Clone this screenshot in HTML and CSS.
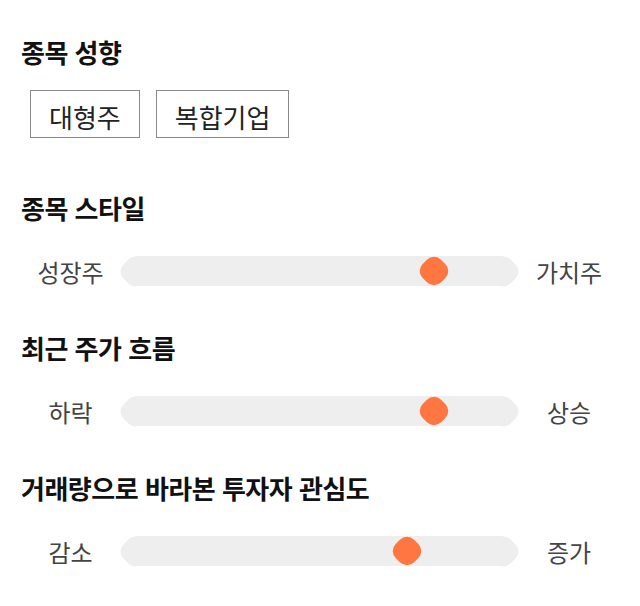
FILE: index.html
```html
<!DOCTYPE html>
<html lang="ko">
<head>
<meta charset="utf-8">
<link rel="stylesheet" href="styles.css">
</head>
<body>
<div class="page">
  <section class="block">
    <h2 class="title">종목 성향</h2>
    <div class="tags">
      <span class="tag">대형주</span>
      <span class="tag">복합기업</span>
    </div>
  </section>

  <section class="block">
    <h2 class="title">종목 스타일</h2>
    <div class="scale">
      <span class="end">성장주</span>
      <div class="track"><span class="thumb" style="--v:0.811"></span></div>
      <span class="end">가치주</span>
    </div>
  </section>

  <section class="block">
    <h2 class="title">최근 주가 흐름</h2>
    <div class="scale">
      <span class="end">하락</span>
      <div class="track"><span class="thumb" style="--v:0.811"></span></div>
      <span class="end">상승</span>
    </div>
  </section>

  <section class="block">
    <h2 class="title">거래량으로 바라본 투자자 관심도</h2>
    <div class="scale">
      <span class="end">감소</span>
      <div class="track"><span class="thumb" style="--v:0.738"></span></div>
      <span class="end">증가</span>
    </div>
  </section>
</div>
</body>
</html>
```

FILE: styles.css
```css
* { box-sizing: border-box; }
html, body { margin: 0; padding: 0; background: #fff; }
body {
  font-family: "Noto Sans CJK KR", "Noto Sans", sans-serif;
  color: #111;
}
.page {
  padding: 28px 20px 0 21px;
  display: flex;
  flex-direction: column;
}
.block { display: flex; flex-direction: column; }
.title {
  margin: 0;
  font-size: 26px;
  letter-spacing: -0.5px;
  font-weight: 700;
  line-height: 48px;
  color: #111;
}
.tags { display: flex; gap: 16px; padding: 14px 0 0 9px; margin-bottom: 46px; }
.tag {
  border: 1px solid #8a8a8a;
  height: 48px;
  padding: 4px 18px 0;
  display: flex;
  align-items: center;
  font-size: 26px;
  color: #222;
}
.scale {
  display: flex;
  align-items: center;
  height: 30px;
  margin: 24px 0 38px;
}
.end {
  width: 102px;
  text-align: center;
  font-size: 24px;
  color: #444;
}
.scale .end:first-child { width: 99px; }
.track {
  flex: 1;
  position: relative;
  height: 30px;
  background: #eeeeee;
  margin: 0 15px;
}
.track::before, .track::after {
  content: "";
  position: absolute;
  top: 1.5px;
  width: 27px;
  height: 27px;
  background: #eeeeee;
  border-radius: 10px;
  transform: rotate(45deg);
}
.track::before { left: -13.5px; }
.track::after { right: -13.5px; }
.thumb {
  position: absolute;
  top: 1px;
  left: calc(var(--v) * (100% + 30px - 28px) - 15px);
  width: 28px;
  height: 28px;
  display: flex;
}
.thumb::before {
  content: "";
  margin: auto;
  flex: none;
  width: 26px;
  height: 26px;
  background: #ff7640;
  border-radius: 10px;
  transform: rotate(45deg);
}
```
